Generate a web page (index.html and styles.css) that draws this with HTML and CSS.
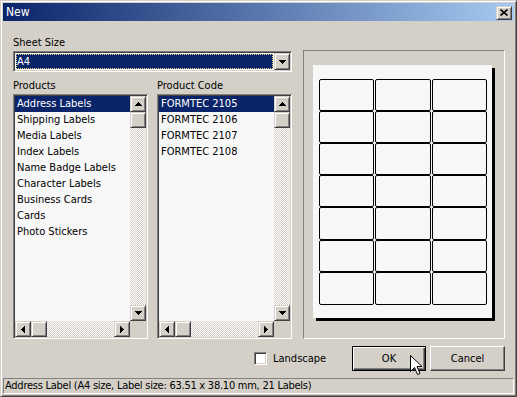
FILE: index.html
```html
<!DOCTYPE html>
<html>
<head>
<meta charset="utf-8">
<title>New</title>
<link rel="stylesheet" href="styles.css">
</head>
<body>
<div class="window">
  <div class="titlebar">
    <span class="title">New</span>
    <div class="raised close"><svg width="8" height="7" viewBox="0 0 8 7"><path d="M0.5 0.5 L7.5 6.5 M7.5 0.5 L0.5 6.5" stroke="#000" stroke-width="1.6"/></svg></div>
  </div>
  <div class="body">
    <div class="main">
      <div class="left">
        <div class="label">Sheet Size</div>
        <div class="combo sunken">
          <div class="combo-value"><span class="combo-sel">A4</span></div>
          <div class="raised combo-btn"><svg class="arrow" width="7" height="4"><rect x="0" y="0" width="7" height="1"/><rect x="1" y="1" width="5" height="1"/><rect x="2" y="2" width="3" height="1"/><rect x="3" y="3" width="1" height="1"/></svg></div>
        </div>
        <div class="lists">
          <div class="listcol">
            <div class="label">Products</div>
            <div class="listbox sunken">
              <ul class="items">
                <li class="sel">Address Labels</li>
                <li>Shipping Labels</li>
                <li>Media Labels</li>
                <li>Index Labels</li>
                <li>Name Badge Labels</li>
                <li>Character Labels</li>
                <li>Business Cards</li>
                <li>Cards</li>
                <li>Photo Stickers</li>
              </ul>
              <div class="vscroll">
                <div class="raised sbtn"><svg class="arrow" width="7" height="4"><rect x="3" y="0" width="1" height="1"/><rect x="2" y="1" width="3" height="1"/><rect x="1" y="2" width="5" height="1"/><rect x="0" y="3" width="7" height="1"/></svg></div>
                <div class="raised sbtn"></div>
                <div class="track"></div>
                <div class="raised sbtn"><svg class="arrow" width="7" height="4"><rect x="0" y="0" width="7" height="1"/><rect x="1" y="1" width="5" height="1"/><rect x="2" y="2" width="3" height="1"/><rect x="3" y="3" width="1" height="1"/></svg></div>
              </div>
              <div class="hscroll">
                <div class="raised sbtn"><svg class="arrow" width="4" height="7"><rect x="0" y="3" width="1" height="1"/><rect x="1" y="2" width="1" height="3"/><rect x="2" y="1" width="1" height="5"/><rect x="3" y="0" width="1" height="7"/></svg></div>
                <div class="raised sbtn"></div>
                <div class="track"></div>
                <div class="raised sbtn"><svg class="arrow" width="4" height="7"><rect x="0" y="0" width="1" height="7"/><rect x="1" y="1" width="1" height="5"/><rect x="2" y="2" width="1" height="3"/><rect x="3" y="3" width="1" height="1"/></svg></div>
              </div>
              <div class="corner"></div>
            </div>
          </div>
          <div class="listcol">
            <div class="label">Product Code</div>
            <div class="listbox sunken">
              <ul class="items">
                <li class="sel">FORMTEC 2105</li>
                <li>FORMTEC 2106</li>
                <li>FORMTEC 2107</li>
                <li>FORMTEC 2108</li>
              </ul>
              <div class="vscroll">
                <div class="raised sbtn"><svg class="arrow" width="7" height="4"><rect x="3" y="0" width="1" height="1"/><rect x="2" y="1" width="3" height="1"/><rect x="1" y="2" width="5" height="1"/><rect x="0" y="3" width="7" height="1"/></svg></div>
                <div class="raised sbtn"></div>
                <div class="track"></div>
                <div class="raised sbtn"><svg class="arrow" width="7" height="4"><rect x="0" y="0" width="7" height="1"/><rect x="1" y="1" width="5" height="1"/><rect x="2" y="2" width="3" height="1"/><rect x="3" y="3" width="1" height="1"/></svg></div>
              </div>
              <div class="hscroll">
                <div class="raised sbtn"><svg class="arrow" width="4" height="7"><rect x="0" y="3" width="1" height="1"/><rect x="1" y="2" width="1" height="3"/><rect x="2" y="1" width="1" height="5"/><rect x="3" y="0" width="1" height="7"/></svg></div>
                <div class="raised sbtn"></div>
                <div class="track"></div>
                <div class="raised sbtn"><svg class="arrow" width="4" height="7"><rect x="0" y="0" width="1" height="7"/><rect x="1" y="1" width="1" height="5"/><rect x="2" y="2" width="1" height="3"/><rect x="3" y="3" width="1" height="1"/></svg></div>
              </div>
              <div class="corner"></div>
            </div>
          </div>
        </div>
      </div>
      <div class="preview">
        <div class="paper">
          <div class="cells">
            <div class="cell"></div><div class="cell"></div><div class="cell"></div>
            <div class="cell"></div><div class="cell"></div><div class="cell"></div>
            <div class="cell"></div><div class="cell"></div><div class="cell"></div>
            <div class="cell"></div><div class="cell"></div><div class="cell"></div>
            <div class="cell"></div><div class="cell"></div><div class="cell"></div>
            <div class="cell"></div><div class="cell"></div><div class="cell"></div>
            <div class="cell"></div><div class="cell"></div><div class="cell"></div>
          </div>
        </div>
      </div>
    </div>
    <div class="actions">
      <div class="check"><span class="box sunken"></span><span>Landscape</span></div>
      <div class="btn btn-default">OK</div>
      <div class="btn">Cancel</div>
    </div>
  </div>
  <div class="status">Address Label (A4 size, Label size: 63.51 x 38.10 mm, 21 Labels)</div>
  <svg class="cursor" width="13" height="21" viewBox="0 0 13 21"><path d="M0.5 0.5 L0.5 16.5 L4.5 12.5 L7.5 19.5 L10 18.5 L7 11.5 L12 11.5 Z" fill="#fff" stroke="#000" stroke-width="1" stroke-linejoin="miter"/></svg>
</div>
</body>
</html>
```

FILE: styles.css
```css
* { box-sizing: border-box; }

html, body {
  margin: 0;
  padding: 0;
  background: #d4d0c8;
}

body {
  font-family: "DejaVu Sans Condensed", "DejaVu Sans", sans-serif;
  font-stretch: condensed;
  font-size: 11px;
  color: #000;
}

.window {
  position: relative;
  width: 517px;
  height: 397px;
  background: #d4d0c8;
  border: 1px solid;
  border-color: #d4d0c8 #404040 #404040 #d4d0c8;
  box-shadow: inset 1px 1px #fff, inset -1px -1px #808080;
  padding: 2px;
  display: flex;
  flex-direction: column;
  overflow: hidden;
}

.titlebar {
  height: 18px;
  flex: none;
  display: flex;
  align-items: center;
  justify-content: space-between;
  padding: 0 2px 0 3px;
  background: linear-gradient(to right, #0a246a, #a6caf0);
}

.title {
  color: #fff;
  font-size: 12px;
  line-height: 18px;
}

.raised {
  background: #d4d0c8;
  border: 1px solid;
  border-color: #d4d0c8 #404040 #404040 #d4d0c8;
  box-shadow: inset 1px 1px #fff, inset -1px -1px #808080;
}

.sunken {
  border: 1px solid;
  border-color: #808080 #fff #fff #808080;
  box-shadow: inset 1px 1px #404040, inset -1px -1px #d4d0c8;
  padding: 1px;
}

.close {
  width: 16px;
  height: 14px;
  display: flex;
  align-items: center;
  justify-content: center;
  margin-top: 1px;
}

.close svg { display: block; }

.body {
  padding: 15px 9px 0 10px;
}

.main {
  display: grid;
  grid-template-columns: 279px 202px;
  column-gap: 11px;
  align-items: start;
}

.label {
  height: 13px;
  line-height: 13px;
  margin-bottom: 2px;
  white-space: nowrap;
}

.combo {
  height: 21px;
  display: flex;
  background: #f7f7f7;
}

.combo-value {
  flex: 1;
  padding: 1px 1px 1px 1px;
  display: flex;
}

.combo-sel {
  flex: 1;
  background: #0a246a;
  color: #fff;
  outline: 1px dotted #e8dc7a;
  outline-offset: -1px;
  line-height: 15px;
  padding-left: 1px;
}

.combo-btn {
  width: 16px;
  height: 17px;
  display: flex;
  align-items: center;
  justify-content: center;
}

.arrow { display: block; shape-rendering: crispEdges; }
.arrow rect { fill: #000; }

.lists {
  margin-top: 7px;
  display: grid;
  grid-template-columns: 135px 135px;
  column-gap: 9px;
}

.listbox {
  height: 245px;
  background: #f7f7f7;
  display: grid;
  grid-template-columns: 115px 16px;
  grid-template-rows: 225px 16px;
}

.items {
  list-style: none;
  margin: 0;
  padding: 0;
  overflow: hidden;
}

.items li {
  height: 16px;
  line-height: 16px;
  padding-left: 2px;
  white-space: nowrap;
}

.items li.sel {
  background: #0a246a;
  color: #fff;
}

.vscroll {
  display: flex;
  flex-direction: column;
}

.hscroll {
  display: flex;
}

.sbtn {
  width: 16px;
  height: 16px;
  flex: none;
  display: flex;
  align-items: center;
  justify-content: center;
}

.track {
  flex: 1;
  background: repeating-conic-gradient(#d4d0c8 0 25%, #fff 0 50%) 0 0 / 2px 2px;
}

.corner {
  background: #d4d0c8;
}

.preview {
  margin-top: 14px;
  height: 289px;
  border: 1px solid;
  border-color: #808080 #fff #fff #808080;
  padding: 14px 0 0 9px;
}

.paper {
  width: 179px;
  height: 253px;
  background: #f7f7f7;
  box-shadow: 3px 3px 0 #000;
  padding: 14px 0 0 6px;
}

.cells {
  display: grid;
  grid-template-columns: 55px 56px 55px;
  grid-template-rows: 32px 32px 32px 32px 33px 32px 33px;
  column-gap: 1px;
}

.cell {
  border: 1px solid #000;
  border-radius: 2px;
}

.actions {
  margin-top: 7px;
  height: 25px;
  display: flex;
  justify-content: flex-end;
  align-items: center;
}

.check {
  width: 98px;
  display: flex;
  align-items: center;
  gap: 6px;
}

.box {
  width: 13px;
  height: 13px;
  background: #fff;
}

.btn {
  height: 25px;
  width: 75px;
  margin-left: 4px;
  display: flex;
  align-items: center;
  justify-content: center;
  background: #d4d0c8;
  border: 1px solid;
  border-color: #fff #404040 #404040 #fff;
  box-shadow: inset -1px -1px #808080;
}

.btn-default {
  width: 74px;
  margin-left: 0;
  border-color: #000;
  box-shadow: inset 1px 1px #fff, inset -1px -1px #404040, inset -2px -2px #808080;
}

.status {
  margin-top: 7px;
  height: 16px;
  line-height: 14px;
  padding-left: 1px;
  border: 1px solid;
  border-color: #808080 #fff #fff #808080;
  white-space: nowrap;
  overflow: hidden;
  letter-spacing: -0.25px;
}

.cursor {
  position: absolute;
  left: 409px;
  top: 354px;
  display: block;
}
```
